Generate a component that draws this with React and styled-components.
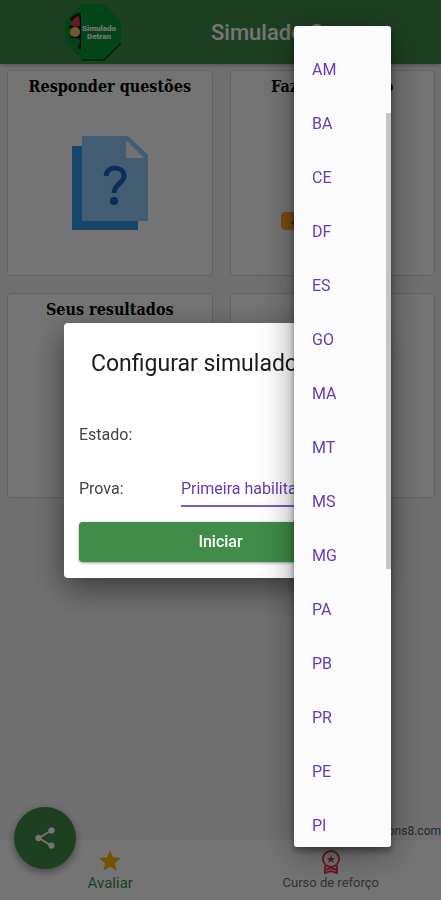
import React, { useState } from "react";
import styled, { createGlobalStyle } from "styled-components";
import { MdShare, MdStar } from "react-icons/md";

const states = [
  "AM",
  "BA",
  "CE",
  "DF",
  "ES",
  "GO",
  "MA",
  "MT",
  "MS",
  "MG",
  "PA",
  "PB",
  "PR",
  "PE",
  "PI",
];

const Logo = () => (
  <svg width="58" height="58" viewBox="0 0 58 58" aria-hidden="true">
    <path d="M18 1h23l16 17v22L40 57H18L1 40V18z" fill="#069a34" />
    <path d="M57 40 40 57H18" fill="none" stroke="#045c1f" strokeWidth="2" />
    <path
      d="M13 10h4v37l-3-1-2-9-6-3 4-2v-4l-6-4 4-2v-3l-2-4z"
      fill="#1c1a10"
    />
    <path d="M7 22c1-5 4-8 8-9l1 9-4 2z" fill="#f0344c" />
    <circle cx="11" cy="29" r="5" fill="#f5c06a" />
    <circle cx="12" cy="39" r="4" fill="#0b8f35" />
    <g
      fill="#fff"
      fontFamily="Roboto, sans-serif"
      fontWeight="900"
      fontSize="8"
      textAnchor="middle"
    >
      <text x="35" y="28">
        Simulado
      </text>
      <text x="35" y="36">
        Detran
      </text>
    </g>
  </svg>
);

const QuestionsIcon = () => (
  <svg width="76" height="94" viewBox="0 0 76 94" aria-hidden="true">
    <path d="M0 10h66v84H0z" fill="#2e9ae6" />
    <path d="M10 0h46l20 19v66H10z" fill="#90caf9" />
    <path d="M54 4v18h18z" fill="#f1f6fb" />
    <path
      d="M34 40c1-11 18-10 18 0 0 7-10 8-10 17"
      fill="none"
      stroke="#1565c0"
      strokeWidth="5"
    />
    <circle cx="42" cy="65" r="4" fill="#1565c0" />
  </svg>
);

const CarIcon = () => (
  <svg width="102" height="94" viewBox="0 0 102 94" aria-hidden="true">
    <path d="M14 78 26 50h50l12 28z" fill="#ffb63d" />
    <path d="M3 76h96l3 3v15H3l-3-3V79z" fill="#ffa726" />
    <path d="M14 84v6l-4-3z" fill="#c62828" />
  </svg>
);

const CourseIcon = () => (
  <svg
    width="22"
    height="24"
    viewBox="0 0 22 24"
    fill="none"
    stroke="#e53946"
    strokeWidth="2"
    aria-hidden="true"
  >
    <circle cx="11" cy="9" r="8" />
    <path
      d="m11 5 1 3h3l-2 2 1 3-3-2-3 2 1-3-2-2h3z"
      fill="#e53946"
      stroke="none"
    />
    <path d="M5 16v7l6-2 6 2v-7M5 20l6-2 6 2" />
  </svg>
);

const App = () => {
  const [selected, setSelected] = useState("");

  return (
    <>
      <GlobalStyle />
      <StyledPage>
        <StyledHeader>
          <Logo />
          <h1>Simulado Carro</h1>
        </StyledHeader>
        <StyledGrid>
          <StyledCard>
            <h2>Responder questões</h2>
            <div className="picture">
              <QuestionsIcon />
            </div>
          </StyledCard>
          <StyledCard>
            <h2>Fazer simulado</h2>
            <div className="picture">
              <CarIcon />
            </div>
          </StyledCard>
          <StyledCard>
            <h2>Seus resultados</h2>
          </StyledCard>
          <StyledCard>
            <h2>Placas</h2>
          </StyledCard>
        </StyledGrid>
        <StyledCredit>icons8.com</StyledCredit>
        <StyledNav>
          <NavLink href="#avaliar" $active>
            <MdStar size={26} color="#f5b800" />
            Avaliar
          </NavLink>
          <NavLink href="#curso">
            <CourseIcon />
            Curso de reforço
          </NavLink>
        </StyledNav>
        <ShareButton type="button" aria-label="Compartilhar">
          <MdShare size={26} />
        </ShareButton>
      </StyledPage>

      <StyledBackdrop>
        <StyledDialog role="dialog" aria-labelledby="dialog-title">
          <h2 id="dialog-title">Configurar simulado</h2>
          <Field>
            <label htmlFor="estado">Estado:</label>
            <Select
              id="estado"
              $width="68px"
              value={selected}
              onChange={(e) => setSelected(e.target.value)}
            >
              <option value="" />
              {states.map((state) => (
                <option key={state}>{state}</option>
              ))}
            </Select>
          </Field>
          <Field>
            <label htmlFor="prova">Prova:</label>
            <Select id="prova" $width="64%">
              <option>Primeira habilitação</option>
            </Select>
          </Field>
          <StartButton type="button">Iniciar</StartButton>
        </StyledDialog>
      </StyledBackdrop>

      <StyledMenu>
        <div className="list" role="listbox" aria-label="Estado">
          {states.map((state) => (
            <MenuItem
              key={state}
              type="button"
              role="option"
              aria-selected={state === selected}
              onClick={() => setSelected(state)}
            >
              {state}
            </MenuItem>
          ))}
        </div>
        <span className="thumb" />
      </StyledMenu>
    </>
  );
};

const GlobalStyle = createGlobalStyle`
  * {
    box-sizing: border-box;
  }

  body {
    margin: 0;
    background: #f4f4f6;
    font-family: Roboto, sans-serif;
  }

  h1, h2, p {
    margin: 0;
  }

  button, select {
    font-family: inherit;
  }
`;

const StyledPage = styled.div`
  min-height: 100vh;
  display: flex;
  flex-direction: column;
`;

const StyledHeader = styled.header`
  height: 64px;
  display: grid;
  grid-template-columns: 147px 1fr;
  align-items: center;
  padding-left: 64px;
  background: #418c48;
  box-shadow: 0 1px 4px rgba(0, 0, 0, 0.3);

  h1 {
    color: #fff;
    font-size: 22px;
    font-weight: 500;
  }
`;

const StyledGrid = styled.main`
  flex: 1;
  display: grid;
  grid-template-columns: 1fr 1fr;
  align-content: start;
  gap: 17px;
  padding: 6px 6px 6px 7px;
`;

const StyledCard = styled.section`
  aspect-ratio: 1;
  display: flex;
  flex-direction: column;
  padding: 6px 0;
  text-align: center;
  background: #fdfdfd;
  border: 1px solid #d4d4e8;
  border-radius: 4px;

  h2 {
    color: #000;
    font-family: "DejaVu Serif Condensed", "DejaVu Serif", serif;
    font-size: 16px;
    line-height: 20px;
  }

  .picture {
    flex: 1;
    display: flex;
    align-items: center;
    justify-content: center;
  }
`;

const StyledCredit = styled.p`
  text-align: right;
  color: #555;
  font-size: 12px;
  line-height: 18px;
`;

const StyledNav = styled.nav`
  height: 60px;
  display: grid;
  grid-template-columns: 1fr 1fr;
  background: #fdfdfd;
`;

const NavLink = styled.a`
  display: flex;
  flex-direction: column;
  align-items: center;
  justify-content: flex-end;
  padding-bottom: 8px;
  color: ${({ $active }) => ($active ? "#3f8b57" : "#6e6e6e")};
  font-size: ${({ $active }) => ($active ? "15px" : "13px")};
  line-height: 18px;
  text-decoration: none;
`;

const ShareButton = styled.button`
  position: fixed;
  left: 14px;
  bottom: 31px;
  width: 62px;
  height: 62px;
  display: flex;
  align-items: center;
  justify-content: center;
  color: #fff;
  background: #418c48;
  border: none;
  border-radius: 50%;
  box-shadow: 0 3px 8px rgba(0, 0, 0, 0.4);
`;

const StyledBackdrop = styled.div`
  position: fixed;
  inset: 0;
  display: flex;
  align-items: center;
  justify-content: center;
  padding: 0 64px;
  background: rgba(0, 0, 0, 0.54);
`;

const StyledDialog = styled.div`
  width: 100%;
  padding: 27px 15px 16px;
  background: #fff;
  border-radius: 4px;
  box-shadow: 0 10px 32px rgba(0, 0, 0, 0.5);

  h2 {
    padding: 0 12px;
    margin-bottom: 30px;
    color: #1c1c1c;
    font-size: 23px;
    font-weight: 400;
    line-height: 28px;
    white-space: nowrap;
  }
`;

const Field = styled.div`
  height: 54px;
  display: flex;
  align-items: center;
  justify-content: space-between;

  label {
    color: #444;
    font-size: 16px;
  }
`;

const Select = styled.select`
  width: ${({ $width }) => $width};
  height: 36px;
  padding: 0;
  appearance: none;
  color: #673ab7;
  background: transparent;
  border: solid #7e57d2;
  border-width: 2px 0;
  border-top-color: transparent;
  font-size: 16px;
`;

const StartButton = styled.button`
  display: block;
  width: 100%;
  height: 40px;
  margin-top: 6px;
  color: #fff;
  background: #418c48;
  border: none;
  border-radius: 4px;
  box-shadow: 0 1px 3px rgba(0, 0, 0, 0.4);
  font-size: 16px;
  font-weight: 500;
`;

const StyledMenu = styled.div`
  position: fixed;
  top: 26px;
  right: 50px;
  bottom: 53px;
  width: 97px;
  background: #fbfbfb;
  border-radius: 3px;
  box-shadow: 0 4px 6px rgba(0, 0, 0, 0.4), 0 6px 36px rgba(0, 0, 0, 0.4);

  .list {
    height: 100%;
    padding-top: 16px;
    overflow-y: auto;
    scrollbar-width: none;
  }

  .thumb {
    position: absolute;
    top: 87px;
    right: 0;
    width: 5px;
    height: 456px;
    background: #c4c4c4;
  }
`;

const MenuItem = styled.button`
  display: block;
  width: 100%;
  height: 54px;
  padding: 0 18px;
  color: #673ab7;
  background: none;
  border: none;
  font-size: 16px;
  text-align: left;
`;

export default App;
